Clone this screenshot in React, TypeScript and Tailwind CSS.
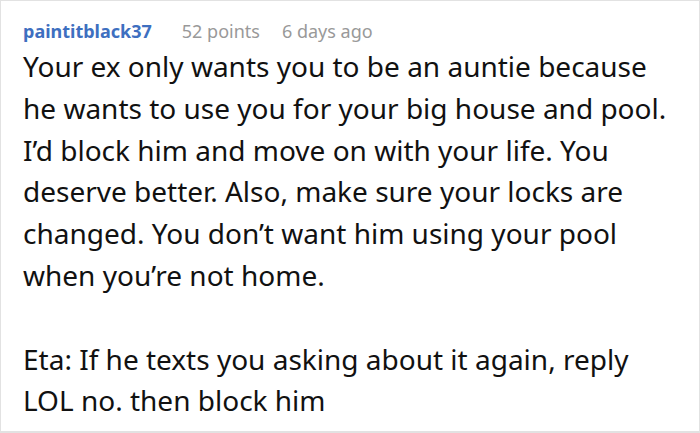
export default function App() {
  return (
    <div className="w-[700px] h-[433px] bg-white border border-b-2 border-[#e2e2e2] overflow-hidden font-['Noto_Sans',sans-serif]">
      <div className="px-[22px] pt-[17px]">
        <div className="flex items-baseline text-[18px] leading-[26px]">
          <span className="font-bold text-[#3e6fc0]">paintitblack37</span>
          <span className="ml-[30px] text-[#999999]">52 points</span>
          <span className="ml-[22px] text-[#999999]">6 days ago</span>
        </div>
        <div className="mt-[2px] text-[28px] leading-[41.8px] text-[#111111]">
          <p>
            Your ex only wants you to be an auntie because he wants to use you for your big house and pool. I’d block
            him and move on with your life. You deserve better. Also, make sure your locks are changed. You don’t want
            him using your pool when you’re not home.
          </p>
          <p className="mt-[41.8px]">Eta: If he texts you asking about it again, reply LOL no. then block him</p>
        </div>
      </div>
    </div>
  )
}
